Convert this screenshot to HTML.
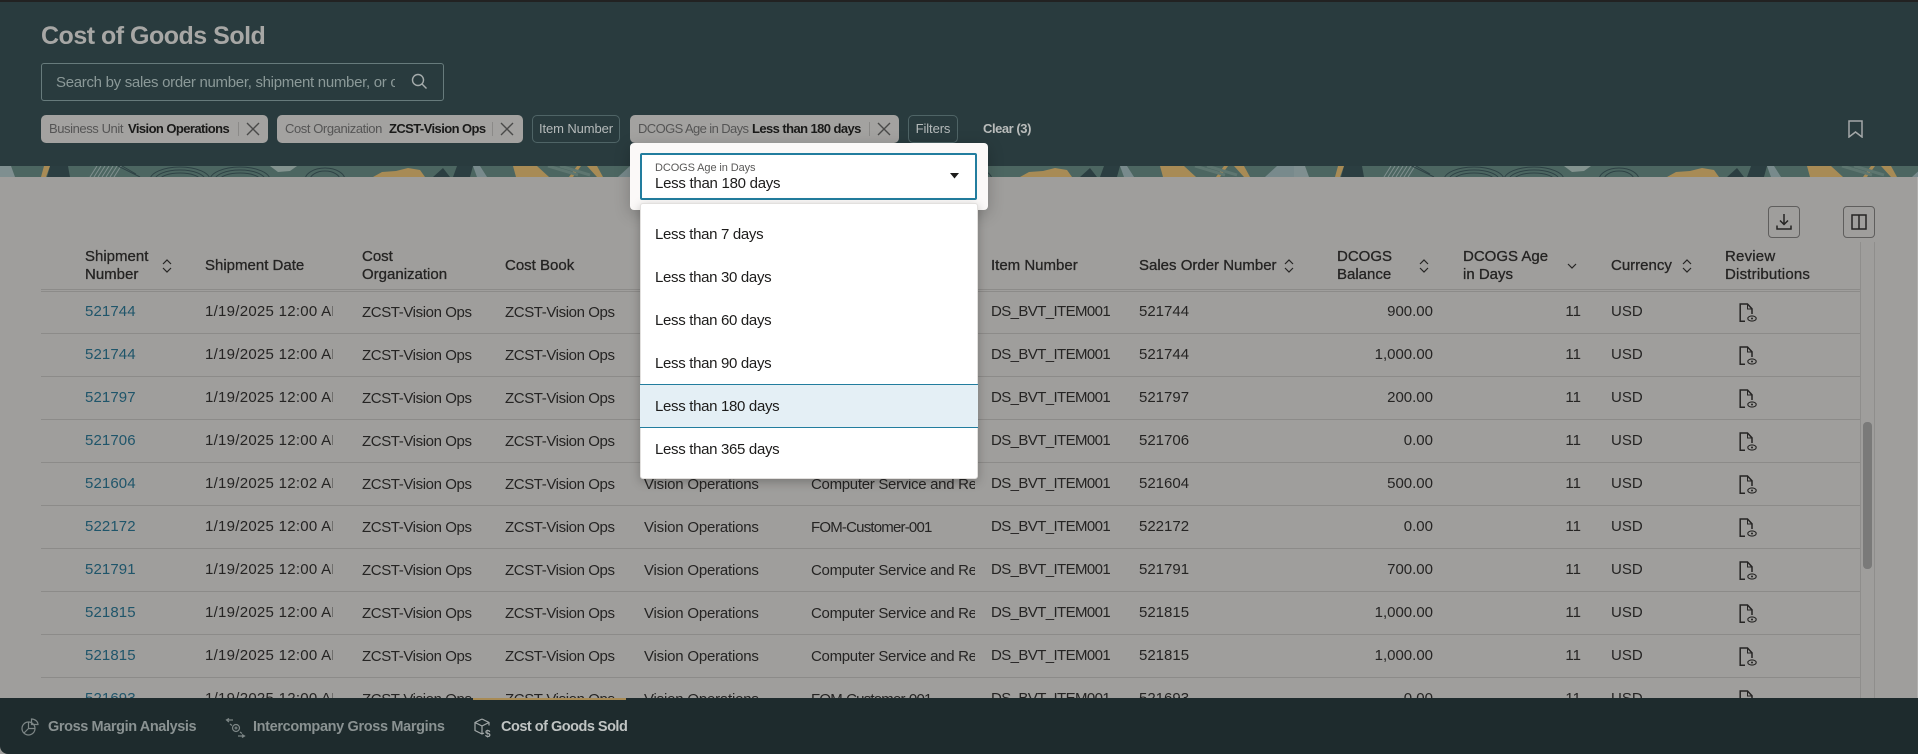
<!DOCTYPE html>
<html lang="en"><head><meta charset="utf-8"><title>Cost of Goods Sold</title>
<style>
*{box-sizing:border-box}
html,body{margin:0;padding:0;width:1918px;height:754px;overflow:hidden;background:#9f9e9c;font-family:"Liberation Sans",sans-serif;color:#252423}
.a{position:absolute;white-space:nowrap}
#top{position:absolute;left:0;top:0;width:1918px;height:166px;background:#293b3e;border-top:2px solid #222}
.chip{position:absolute;top:115px;height:28px;border-radius:5px;background:#a3a2a0}
.chipo{position:absolute;top:115px;height:28px;border-radius:5px;border:1px solid #4f6466;color:#b5baba;font-size:13px;line-height:26px;text-align:center;letter-spacing:-.1px}
.cl{position:absolute;top:115px;line-height:28px;font-size:13px;color:#555;white-space:nowrap;letter-spacing:-.42px}
.cv{position:absolute;top:115px;line-height:28px;font-size:13px;color:#1a1a19;font-weight:bold;white-space:nowrap;letter-spacing:-.58px}
.dv{position:absolute;top:122px;width:1px;height:14px;background:#8b8a88}
.th{position:absolute;font-size:15px;line-height:18px;color:#252423;white-space:nowrap;-webkit-text-stroke:.3px #252423}
.r{position:absolute;left:0;width:1860px;height:43px;font-size:15px;line-height:43px}
.r:after{content:"";position:absolute;left:41px;right:0;bottom:-1px;height:1px;background:#8c8b89}
.r span{position:absolute;top:0;white-space:nowrap;overflow:hidden;height:43px}
.n{left:85px;color:#1f556a;letter-spacing:.1px}
.d{left:205px;width:128px;letter-spacing:.27px}
.r span.o{left:362px;top:1px;letter-spacing:-.4px}
.r span.b{left:505px;top:1px;letter-spacing:-.4px}
.r span.u{left:644px;top:1px;letter-spacing:-.2px}
.r span.c{left:811px;width:164px;top:1px;letter-spacing:-.3px}
.r span.f{letter-spacing:-.8px}
.i{left:991px;letter-spacing:-.6px}.s{left:1139px}
.m{right:427px;text-align:right}
.g{right:279px;text-align:right}
.y{left:1611px}
.r svg{position:absolute;left:1739px;top:13px}
.opt{position:absolute;left:640px;width:337px;height:43px;font-size:15px;line-height:45px;padding-left:15px;color:#1d1c1b;letter-spacing:-.32px}
</style></head><body>

<!-- table -->
<div class="th" style="left:85px;top:248px">Shipment<br>Number</div>
<div class="th" style="left:205px;top:257px">Shipment Date</div>
<div class="th" style="left:362px;top:248px">Cost<br>Organization</div>
<div class="th" style="left:505px;top:257px">Cost Book</div>
<div class="th" style="left:991px;top:257px">Item Number</div>
<div class="th" style="left:1139px;top:257px">Sales Order Number</div>
<div class="th" style="left:1337px;top:248px">DCOGS<br>Balance</div>
<div class="th" style="left:1463px;top:248px">DCOGS Age<br>in Days</div>
<div class="th" style="left:1611px;top:257px">Currency</div>
<div class="th" style="left:1725px;top:248px;letter-spacing:.2px">Review<br>Distributions</div>

<svg class="a" style="left:162px;top:259px" width="10" height="14" fill="none" stroke="#252423" stroke-width="1.2"><path d="M1 5L5 1l4 4M1 9l4 4 4-4"/></svg>
<svg class="a" style="left:1284px;top:259px" width="10" height="14" fill="none" stroke="#252423" stroke-width="1.2"><path d="M1 5L5 1l4 4M1 9l4 4 4-4"/></svg>
<svg class="a" style="left:1419px;top:259px" width="10" height="14" fill="none" stroke="#252423" stroke-width="1.2"><path d="M1 5L5 1l4 4M1 9l4 4 4-4"/></svg>
<svg class="a" style="left:1682px;top:259px" width="10" height="14" fill="none" stroke="#252423" stroke-width="1.2"><path d="M1 5L5 1l4 4M1 9l4 4 4-4"/></svg>
<svg class="a" style="left:1567px;top:262px" width="10" height="8" fill="none" stroke="#252423" stroke-width="1.2"><path d="M1 2l4 4 4-4"/></svg>

<div class="a" style="left:41px;top:289px;width:1819px;height:1px;background:#8c8b89"></div>
<div class="a" style="left:41px;top:291px;width:1819px;height:1px;background:#8c8b89"></div>

<div class="r" style="top:290px"><span class="n">521744</span><span class="d">1/19/2025 12:00 AM</span><span class="o">ZCST-Vision Ops</span><span class="b">ZCST-Vision Ops</span><span class="u">Vision Operations</span><span class="c">Computer Service and Rental</span><span class="i">DS_BVT_ITEM001</span><span class="s">521744</span><span class="m">900.00</span><span class="g">11</span><span class="y">USD</span><svg width="18" height="20" fill="none" stroke="#252423" stroke-width="1.5"><path d="M6 18.2H1.2V1H8.5L13 5.8V11"/><path d="M8.5 1v5H13" stroke-width="1"/><ellipse cx="13" cy="15.5" rx="4.2" ry="2.6" stroke-width="1.1"/><circle cx="13" cy="15.5" r="1" fill="#252423" stroke="none"/></svg></div>
<div class="r" style="top:333px"><span class="n">521744</span><span class="d">1/19/2025 12:00 AM</span><span class="o">ZCST-Vision Ops</span><span class="b">ZCST-Vision Ops</span><span class="u">Vision Operations</span><span class="c">Computer Service and Rental</span><span class="i">DS_BVT_ITEM001</span><span class="s">521744</span><span class="m">1,000.00</span><span class="g">11</span><span class="y">USD</span><svg width="18" height="20" fill="none" stroke="#252423" stroke-width="1.5"><path d="M6 18.2H1.2V1H8.5L13 5.8V11"/><path d="M8.5 1v5H13" stroke-width="1"/><ellipse cx="13" cy="15.5" rx="4.2" ry="2.6" stroke-width="1.1"/><circle cx="13" cy="15.5" r="1" fill="#252423" stroke="none"/></svg></div>
<div class="r" style="top:376px"><span class="n">521797</span><span class="d">1/19/2025 12:00 AM</span><span class="o">ZCST-Vision Ops</span><span class="b">ZCST-Vision Ops</span><span class="u">Vision Operations</span><span class="c">Computer Service and Rental</span><span class="i">DS_BVT_ITEM001</span><span class="s">521797</span><span class="m">200.00</span><span class="g">11</span><span class="y">USD</span><svg width="18" height="20" fill="none" stroke="#252423" stroke-width="1.5"><path d="M6 18.2H1.2V1H8.5L13 5.8V11"/><path d="M8.5 1v5H13" stroke-width="1"/><ellipse cx="13" cy="15.5" rx="4.2" ry="2.6" stroke-width="1.1"/><circle cx="13" cy="15.5" r="1" fill="#252423" stroke="none"/></svg></div>
<div class="r" style="top:419px"><span class="n">521706</span><span class="d">1/19/2025 12:00 AM</span><span class="o">ZCST-Vision Ops</span><span class="b">ZCST-Vision Ops</span><span class="u">Vision Operations</span><span class="c">Computer Service and Rental</span><span class="i">DS_BVT_ITEM001</span><span class="s">521706</span><span class="m">0.00</span><span class="g">11</span><span class="y">USD</span><svg width="18" height="20" fill="none" stroke="#252423" stroke-width="1.5"><path d="M6 18.2H1.2V1H8.5L13 5.8V11"/><path d="M8.5 1v5H13" stroke-width="1"/><ellipse cx="13" cy="15.5" rx="4.2" ry="2.6" stroke-width="1.1"/><circle cx="13" cy="15.5" r="1" fill="#252423" stroke="none"/></svg></div>
<div class="r" style="top:462px"><span class="n">521604</span><span class="d">1/19/2025 12:02 AM</span><span class="o">ZCST-Vision Ops</span><span class="b">ZCST-Vision Ops</span><span class="u">Vision Operations</span><span class="c">Computer Service and Rental</span><span class="i">DS_BVT_ITEM001</span><span class="s">521604</span><span class="m">500.00</span><span class="g">11</span><span class="y">USD</span><svg width="18" height="20" fill="none" stroke="#252423" stroke-width="1.5"><path d="M6 18.2H1.2V1H8.5L13 5.8V11"/><path d="M8.5 1v5H13" stroke-width="1"/><ellipse cx="13" cy="15.5" rx="4.2" ry="2.6" stroke-width="1.1"/><circle cx="13" cy="15.5" r="1" fill="#252423" stroke="none"/></svg></div>
<div class="r" style="top:505px"><span class="n">522172</span><span class="d">1/19/2025 12:00 AM</span><span class="o">ZCST-Vision Ops</span><span class="b">ZCST-Vision Ops</span><span class="u">Vision Operations</span><span class="c f">FOM-Customer-001</span><span class="i">DS_BVT_ITEM001</span><span class="s">522172</span><span class="m">0.00</span><span class="g">11</span><span class="y">USD</span><svg width="18" height="20" fill="none" stroke="#252423" stroke-width="1.5"><path d="M6 18.2H1.2V1H8.5L13 5.8V11"/><path d="M8.5 1v5H13" stroke-width="1"/><ellipse cx="13" cy="15.5" rx="4.2" ry="2.6" stroke-width="1.1"/><circle cx="13" cy="15.5" r="1" fill="#252423" stroke="none"/></svg></div>
<div class="r" style="top:548px"><span class="n">521791</span><span class="d">1/19/2025 12:00 AM</span><span class="o">ZCST-Vision Ops</span><span class="b">ZCST-Vision Ops</span><span class="u">Vision Operations</span><span class="c">Computer Service and Rental</span><span class="i">DS_BVT_ITEM001</span><span class="s">521791</span><span class="m">700.00</span><span class="g">11</span><span class="y">USD</span><svg width="18" height="20" fill="none" stroke="#252423" stroke-width="1.5"><path d="M6 18.2H1.2V1H8.5L13 5.8V11"/><path d="M8.5 1v5H13" stroke-width="1"/><ellipse cx="13" cy="15.5" rx="4.2" ry="2.6" stroke-width="1.1"/><circle cx="13" cy="15.5" r="1" fill="#252423" stroke="none"/></svg></div>
<div class="r" style="top:591px"><span class="n">521815</span><span class="d">1/19/2025 12:00 AM</span><span class="o">ZCST-Vision Ops</span><span class="b">ZCST-Vision Ops</span><span class="u">Vision Operations</span><span class="c">Computer Service and Rental</span><span class="i">DS_BVT_ITEM001</span><span class="s">521815</span><span class="m">1,000.00</span><span class="g">11</span><span class="y">USD</span><svg width="18" height="20" fill="none" stroke="#252423" stroke-width="1.5"><path d="M6 18.2H1.2V1H8.5L13 5.8V11"/><path d="M8.5 1v5H13" stroke-width="1"/><ellipse cx="13" cy="15.5" rx="4.2" ry="2.6" stroke-width="1.1"/><circle cx="13" cy="15.5" r="1" fill="#252423" stroke="none"/></svg></div>
<div class="r" style="top:634px"><span class="n">521815</span><span class="d">1/19/2025 12:00 AM</span><span class="o">ZCST-Vision Ops</span><span class="b">ZCST-Vision Ops</span><span class="u">Vision Operations</span><span class="c">Computer Service and Rental</span><span class="i">DS_BVT_ITEM001</span><span class="s">521815</span><span class="m">1,000.00</span><span class="g">11</span><span class="y">USD</span><svg width="18" height="20" fill="none" stroke="#252423" stroke-width="1.5"><path d="M6 18.2H1.2V1H8.5L13 5.8V11"/><path d="M8.5 1v5H13" stroke-width="1"/><ellipse cx="13" cy="15.5" rx="4.2" ry="2.6" stroke-width="1.1"/><circle cx="13" cy="15.5" r="1" fill="#252423" stroke="none"/></svg></div>
<div class="r" style="top:677px"><span class="n">521693</span><span class="d">1/19/2025 12:00 AM</span><span class="o">ZCST-Vision Ops</span><span class="b">ZCST-Vision Ops</span><span class="u">Vision Operations</span><span class="c f">FOM-Customer-001</span><span class="i">DS_BVT_ITEM001</span><span class="s">521693</span><span class="m">0.00</span><span class="g">11</span><span class="y">USD</span><svg width="18" height="20" fill="none" stroke="#252423" stroke-width="1.5"><path d="M6 18.2H1.2V1H8.5L13 5.8V11"/><path d="M8.5 1v5H13" stroke-width="1"/><ellipse cx="13" cy="15.5" rx="4.2" ry="2.6" stroke-width="1.1"/><circle cx="13" cy="15.5" r="1" fill="#252423" stroke="none"/></svg></div>

<!-- scrollbar -->
<div class="a" style="left:1860px;top:242px;width:1px;height:456px;background:#8f8e8c"></div>
<div class="a" style="left:1874px;top:242px;width:1px;height:456px;background:#8f8e8c"></div>
<div class="a" style="left:1863px;top:422px;width:9px;height:147px;border-radius:4px;background:#7a7a79"></div>
<div class="a" style="left:1917px;top:177px;width:1px;height:521px;background:#b0afad"></div>

<!-- toolbar -->
<div class="a" style="left:1768px;top:206px;width:32px;height:32px;border:1px solid #5f5e5d;border-radius:4px"></div>
<svg class="a" style="left:1775px;top:213px" width="18" height="18" fill="none" stroke="#252423" stroke-width="1.5"><path d="M9 1v10M5 7.5l4 4 4-4M2 12.5v3.5h14v-3.5"/></svg>
<div class="a" style="left:1843px;top:206px;width:32px;height:32px;border:1px solid #5f5e5d;border-radius:4px"></div>
<svg class="a" style="left:1851px;top:214px" width="16" height="16" fill="none" stroke="#252423" stroke-width="1.5"><path d="M1 1h14v14H1zM8 1v14"/></svg>

<!-- header -->
<div id="top"></div>
<svg class="a" style="left:0;top:166px" width="1918" height="11">
<defs>
<pattern id="p" patternUnits="userSpaceOnUse" width="647" height="11">
<rect width="647" height="11" fill="#4c6661"/>
<path d="M0 0H11L15 11H0z" fill="#7f8f90"/>
<path d="M618 11L630 0H647V11z" fill="#788a8c"/>
<path d="M50 0H68L70 11H47z" fill="#2b3e41"/>
<path d="M44 0H50L46 11H41z" fill="#a88b55"/>
<g fill="none" stroke="#7f8f8e" stroke-width="1">
<path d="M90 11L97 0M94 11L101 0M98 11L105 0M102 11L109 0M106 11L113 0M110 11L117 0M114 11L121 0"/>
</g>
<g fill="none" stroke="#2e4245" stroke-width="1">
<ellipse cx="180" cy="14" rx="30" ry="13"/><ellipse cx="180" cy="14" rx="25" ry="10"/><ellipse cx="180" cy="14" rx="20" ry="7"/>
<ellipse cx="240" cy="14" rx="30" ry="13"/><ellipse cx="240" cy="14" rx="25" ry="10"/><ellipse cx="240" cy="14" rx="20" ry="7"/>
<ellipse cx="325" cy="14" rx="20" ry="12"/><ellipse cx="325" cy="14" rx="15" ry="9"/>
<path d="M118 0L140 11M122 0L136 8"/>
</g>
<path d="M270 0H297L290 5 278 6z" fill="#83938f"/>
<path d="M373 11L382 6 396 5 408 2 420 4 425 11z" fill="#a88b55"/>
<path d="M433 11L443 2 450 11z" fill="#2b3e41"/>
<path d="M457 0H473L470 11H453z" fill="#2b3e41"/>
<path d="M473 0H480L487 11H477z" fill="#788a8c"/>
<path d="M513 0H537L549 11H516z" fill="#a88b55"/>
<path d="M577 0H581L573 11H569z" fill="#a88b55"/>
<path d="M587 0H597L603 11H597z" fill="#a88b55"/>
<path d="M548 0L578 9M560 0L590 9" stroke="#5e7670" stroke-width="3" fill="none"/>
</pattern>
</defs>
<rect width="1918" height="11" fill="url(#p)"/>
</svg>

<div class="a" style="left:41px;top:20px;font-size:25px;line-height:32px;font-weight:bold;color:#a7a7a5;letter-spacing:-.5px">Cost of Goods Sold</div>

<div class="a" style="left:41px;top:63px;width:403px;height:38px;border:1px solid #677b7c;border-radius:3px"></div>
<div class="a" style="left:56px;top:64px;width:339px;height:38px;overflow:hidden;font-size:15px;line-height:38px;color:#8b9998;letter-spacing:-.3px">Search by sales order number, shipment number, or customer</div>
<svg class="a" style="left:410px;top:72px" width="18" height="18" fill="none" stroke="#a5acac" stroke-width="1.4"><circle cx="8" cy="8" r="5.5"/><path d="M12 12l4.500 4.500"/></svg>

<div class="chip" style="left:41px;width:227px"></div>
<div class="cl" style="left:49px">Business Unit</div><div class="cv" style="left:128px">Vision Operations</div>
<div class="dv" style="left:238px"></div>
<svg class="a" style="left:246px;top:122px" width="14" height="14" fill="none" stroke="#4a4a49" stroke-width="1.4"><path d="M1 1l12 12M13 1L1 13"/></svg>

<div class="chip" style="left:277px;width:246px"></div>
<div class="cl" style="left:285px">Cost Organization</div><div class="cv" style="left:389px">ZCST-Vision Ops</div>
<div class="dv" style="left:492px"></div>
<svg class="a" style="left:500px;top:122px" width="14" height="14" fill="none" stroke="#4a4a49" stroke-width="1.4"><path d="M1 1l12 12M13 1L1 13"/></svg>

<div class="chipo" style="left:532px;width:88px">Item Number</div>

<div class="chip" style="left:630px;width:269px"></div>
<div class="cl" style="left:638px;letter-spacing:-.6px">DCOGS Age in Days</div><div class="cv" style="left:752px">Less than 180 days</div>
<div class="dv" style="left:869px"></div>
<svg class="a" style="left:877px;top:122px" width="14" height="14" fill="none" stroke="#4a4a49" stroke-width="1.4"><path d="M1 1l12 12M13 1L1 13"/></svg>

<div class="chipo" style="left:908px;width:50px">Filters</div>
<div class="a" style="left:983px;top:115px;line-height:28px;font-size:13px;font-weight:bold;color:#b9bcbb;letter-spacing:-.45px">Clear (3)</div>

<svg class="a" style="left:1848px;top:120px" width="15" height="18" fill="none" stroke="#a4a8a8" stroke-width="1.5"><path d="M1 1h13v16l-6.5-5L1 17z"/></svg>

<!-- popup -->
<div class="a" style="left:630px;top:143px;width:358px;height:67px;background:#fbf9f8;border-radius:4px;box-shadow:0 4px 16px rgba(0,0,0,.22)"></div>
<div class="a" style="left:640px;top:153px;width:337px;height:47px;background:#fff;border:2px solid #227d9e;border-radius:2px"></div>
<div class="a" style="left:655px;top:162px;font-size:11px;line-height:13px;color:#5a5958;letter-spacing:-.1px">DCOGS Age in Days</div>
<div class="a" style="left:655px;top:175px;font-size:15px;line-height:18px;color:#1d1c1b;letter-spacing:-.27px">Less than 180 days</div>
<svg class="a" style="left:950px;top:173px" width="9" height="6"><path d="M0 0h9L4.500 5.500z" fill="#1d1c1b"/></svg>

<div class="a" style="left:640px;top:203px;width:338px;height:276px;background:#fff;border:1px solid #e2e0de;border-radius:3px;box-shadow:0 3px 10px rgba(0,0,0,.25)"></div>
<div class="opt" style="top:212px">Less than 7 days</div>
<div class="opt" style="top:255px">Less than 30 days</div>
<div class="opt" style="top:298px">Less than 60 days</div>
<div class="opt" style="top:341px">Less than 90 days</div>
<div class="opt" style="top:384px;width:338px;height:44px;line-height:43px;background:#e4eff5;border-top:1px solid #227d9e;border-bottom:1px solid #227d9e">Less than 180 days</div>
<div class="opt" style="top:427px">Less than 365 days</div>

<!-- bottom bar -->
<div class="a" style="left:0;top:698px;width:1918px;height:56px;background:#1e2b2d;border-radius:0 0 0 8px"></div>
<div class="a" style="left:473px;top:698px;width:153px;height:2px;background:#a88b55"></div>
<svg class="a" style="left:21px;top:718px" width="18" height="18" fill="none" stroke="#7d8686" stroke-width="1.2"><circle cx="7.5" cy="10.5" r="6.5"/><path d="M7.5 4v6.500H14M7.5 10.500L3 15"/><path d="M10.500 1v5.500H17C17 3.500 14 1 10.500 1z"/></svg>
<div class="a" style="left:48px;top:716px;line-height:22px;font-size:14.5px;font-weight:bold;color:#8a9292;letter-spacing:-.4px">Gross Margin Analysis</div>
<svg class="a" style="left:225px;top:718px" width="21" height="20" fill="none" stroke="#7d8686" stroke-width="1.2"><path d="M8 2H2M4 .5L1.500 2 4 4"/><path d="M13 18h6M17 16.500L19.500 18 17 19.500"/><circle cx="11" cy="10" r="3.500"/><path d="M11 8.500v3M9.500 10h3M5 6l2 1.500M15 14l2 1.500"/></svg>
<div class="a" style="left:253px;top:716px;line-height:22px;font-size:14.5px;font-weight:bold;color:#8a9292;letter-spacing:-.35px">Intercompany Gross Margins</div>
<svg class="a" style="left:474px;top:718px" width="20" height="20" fill="none" stroke="#a4aaaa" stroke-width="1.2"><path d="M8 1L1 4.500v8L8 16l2-1M8 1l7 3.500v3M1 4.500L8 8l7-3.500M8 8v8"/><text x="11" y="19" font-size="10" font-weight="bold" fill="#a4aaaa" stroke="none" font-family="Liberation Sans">$</text></svg>
<div class="a" style="left:501px;top:716px;line-height:22px;font-size:14.5px;font-weight:bold;color:#c0c4c3;letter-spacing:-.5px">Cost of Goods Sold</div>

</body></html>
